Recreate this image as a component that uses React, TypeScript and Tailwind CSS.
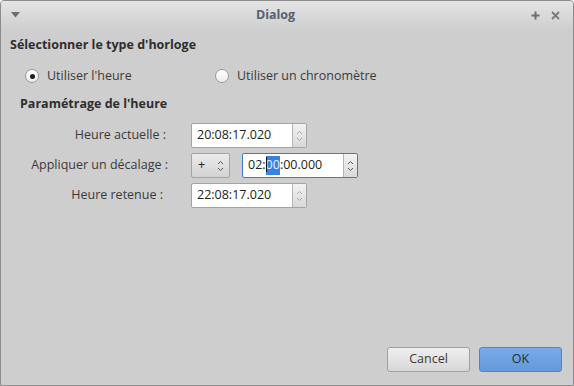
import React from 'react';

const font = { fontFamily: '"Open Sans", "Noto Sans", sans-serif' };

const Radio: React.FC<{ checked?: boolean }> = ({ checked }) => (
  <span className="flex h-[14px] w-[14px] items-center justify-center rounded-full border border-[#9a9a9a] bg-gradient-to-b from-[#ffffff] to-[#ececec]">
    {checked && <span className="h-[5px] w-[5px] rounded-full bg-[#1e1e1e]" />}
  </span>
);

const SpinArrows: React.FC<{ dark?: boolean }> = ({ dark }) => (
  <svg width="7" height="14" viewBox="0 0 7 14" fill="none">
    <path d="M1 5 L3.5 2.5 L6 5" stroke={dark ? '#555' : '#a8a8a8'} strokeWidth="1" />
    <path d="M1 9 L3.5 11.5 L6 9" stroke={dark ? '#555' : '#a8a8a8'} strokeWidth="1" />
  </svg>
);

const TimeSpin: React.FC<{ value: React.ReactNode }> = ({ value }) => (
  <div className="flex h-[25px] w-[116px] rounded-[2px] border border-[#a3a3a3] bg-white">
    <div className="flex flex-1 items-center pl-[5px] text-[12.5px] text-[#222]">{value}</div>
    <div className="flex w-[14px] items-center justify-center rounded-r-[2px] border-l border-[#b5b5b5] bg-gradient-to-b from-[#f2f2f2] to-[#d9d9d9]">
      <SpinArrows />
    </div>
  </div>
);

export default function App() {
  return (
    <div
      className="flex h-[386px] w-[574px] flex-col overflow-hidden rounded-t-[4px] border border-[#8c8c8c] bg-[#cecece] text-[12.5px] text-[#3a3a3a]"
      style={font}
    >
      <div className="flex h-[28px] items-center bg-gradient-to-b from-[#e4e4e4] to-[#cfcfcf] px-[9px]">
        <svg width="9" height="6" viewBox="0 0 9 6" className="ml-[1px]">
          <path d="M0 0 H9 L4.5 5.5 Z" fill="#6e6e6e" />
        </svg>
        <div className="flex-1 text-center font-bold text-[#56606e]">Dialog</div>
        <div className="flex items-center gap-[11px] pr-[4px]">
          <svg width="9" height="9" viewBox="0 0 9 9">
            <path d="M4.5 0.5 V8.5 M0.5 4.5 H8.5" stroke="#6e6e6e" strokeWidth="2" />
          </svg>
          <svg width="9" height="9" viewBox="0 0 9 9">
            <path d="M1 1 L8 8 M8 1 L1 8" stroke="#7a7a7a" strokeWidth="1.8" />
          </svg>
        </div>
      </div>

      <div className="flex flex-1 flex-col px-[9px] pt-[7px]">
        <div className="h-[18px] font-bold leading-[18px] text-[#2e2e2e]">
          Sélectionner le type d'horloge
        </div>

        <div className="mt-[14px] flex h-[16px] items-center">
          <div className="flex w-[205px] items-center pl-[15px]">
            <Radio checked />
            <span className="ml-[8px]">Utiliser l'heure</span>
          </div>
          <div className="flex items-center">
            <Radio />
            <span className="ml-[8px]">Utiliser un chronomètre</span>
          </div>
        </div>

        <div className="mt-[11px] h-[18px] pl-[10px] font-bold leading-[18px] text-[#2e2e2e]">
          Paramétrage de l'heure
        </div>

        <div className="mt-[10px] flex flex-col gap-[5px] pl-[10px]">
          <div className="flex items-center">
            <div className="w-[146px] text-right">Heure actuelle :</div>
            <div className="ml-[25px]">
              <TimeSpin value="20:08:17.020" />
            </div>
          </div>
          <div className="flex items-center">
            <div className="w-[148px] text-right">Appliquer un décalage :</div>
            <div className="ml-[23px] flex items-center gap-[12px]">
              <div className="flex h-[25px] w-[39px] items-center justify-between rounded-[2px] border border-[#a3a3a3] bg-gradient-to-b from-[#ececec] to-[#d2d2d2] pl-[6px] pr-[5px] text-[#222]">
                <span>+</span>
                <SpinArrows dark />
              </div>
              <div className="flex h-[25px] w-[116px] rounded-[2px] border border-[#3d7cc9] bg-white">
                <div className="flex flex-1 items-center pl-[5px] text-[#222]">
                  <span>02:</span>
                  <span className="relative bg-[#3584e4] text-[#e8f0fb]">
                    <span className="absolute left-0 top-[1px] h-[15px] w-[1px] bg-[#111]" />
                    00
                  </span>
                  <span>:00.000</span>
                </div>
                <div className="flex w-[14px] items-center justify-center rounded-r-[2px] border-l border-[#b5b5b5] bg-gradient-to-b from-[#f2f2f2] to-[#d9d9d9]">
                  <SpinArrows dark />
                </div>
              </div>
            </div>
          </div>
          <div className="flex items-center">
            <div className="w-[143px] text-right">Heure retenue :</div>
            <div className="ml-[28px]">
              <TimeSpin value="22:08:17.020" />
            </div>
          </div>
        </div>

        <div className="mt-auto mb-[13px] flex justify-end gap-[9px] pr-[2px]">
          <button className="h-[25px] w-[83px] rounded-[3px] border border-[#a0a0a0] bg-gradient-to-b from-[#efefef] to-[#d7d7d7] text-[#3a3a3a]">
            Cancel
          </button>
          <button className="h-[25px] w-[83px] rounded-[3px] border border-[#4d86cf] bg-gradient-to-b from-[#78abe8] to-[#6399dc] text-[#2a2a2a]">
            OK
          </button>
        </div>
      </div>
    </div>
  );
}
